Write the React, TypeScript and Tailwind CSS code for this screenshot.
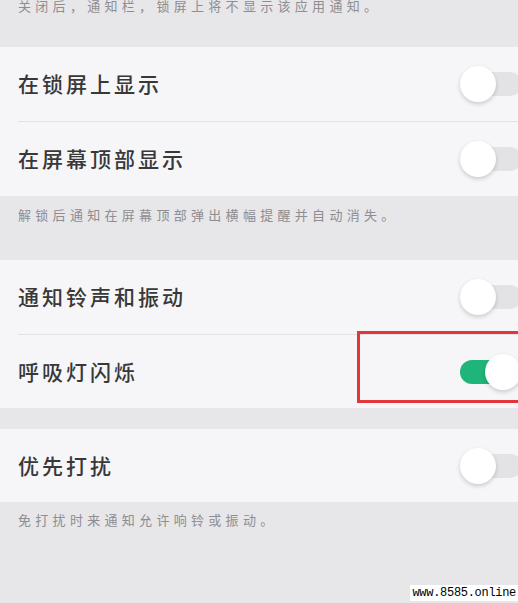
import React from "react";

const cjk = "font-['Noto_Sans_CJK_SC','Noto_Sans',sans-serif]";

/* ── Switch ── */
function Toggle({ on = false }: { on?: boolean }) {
  return (
    <div className="relative w-[62px] h-[24px] -mr-[4px] shrink-0">
      <div
        className={`absolute inset-0 rounded-full ${on ? "bg-[#1fb47a]" : "bg-[#e3e2e5]"}`}
      />
      <div
        className={`absolute top-[-6px] h-[36px] w-[36px] rounded-full bg-white shadow-[0_2px_4px_rgba(0,0,0,0.18)] ${
          on ? "left-[25px]" : "left-0"
        }`}
      />
    </div>
  );
}

function Row({
  label,
  on,
  height = "h-[74px]",
  children,
}: {
  label: string;
  on?: boolean;
  height?: string;
  children?: React.ReactNode;
}) {
  return (
    <div className={`relative flex items-center justify-between pl-[18px] ${height}`}>
      <span className={`${cjk} text-[21px] tracking-[3px] font-medium text-[#383838]`}>
        {label}
      </span>
      <Toggle on={on} />
      {children}
    </div>
  );
}

function Note({ text, className = "" }: { text: string; className?: string }) {
  return (
    <p
      className={`${cjk} px-[18px] text-[13px] leading-[18px] tracking-[4.3px] text-[#8e8d90] whitespace-nowrap ${className}`}
    >
      {text}
    </p>
  );
}

const Divider = () => <div className="ml-[18px] h-px bg-[#e3e2e5]" />;

export default function App() {
  return (
    <div className="relative w-[518px] h-[603px] overflow-hidden bg-[#e7e6e9]">
      {/* top note, cut off by the screen edge */}
      <div className="h-[47px] overflow-hidden">
        <Note text="关闭后，通知栏，锁屏上将不显示该应用通知。" className="-mt-[3px]" />
      </div>

      <div className="bg-[#f6f5f8]">
        <Row label="在锁屏上显示" />
        <Divider />
        <Row label="在屏幕顶部显示" />
      </div>

      <div className="h-[64px] pt-[10px]">
        <Note text="解锁后通知在屏幕顶部弹出横幅提醒并自动消失。" />
      </div>

      <div className="bg-[#f6f5f8]">
        <Row label="通知铃声和振动" />
        <Divider />
        <Row label="呼吸灯闪烁" on height="h-[73px]">
          {/* highlight frame */}
          <div className="absolute left-[357px] top-[-4px] h-[72px] w-[170px] border-[3px] border-[#e4363a]" />
        </Row>
      </div>

      <div className="h-[21px]" />

      <div className="bg-[#f6f5f8]">
        <Row label="优先打扰" height="h-[73px]" />
      </div>

      <div className="pt-[9px]">
        <Note text="免打扰时来通知允许响铃或振动。" />
      </div>

      {/* watermark */}
      <div className="absolute right-0 bottom-[2px] bg-white px-[2px] font-['Liberation_Mono',monospace] text-[12px] leading-[16px] tracking-[-0.3px] text-black">
        www.8585.online
      </div>
    </div>
  );
}
